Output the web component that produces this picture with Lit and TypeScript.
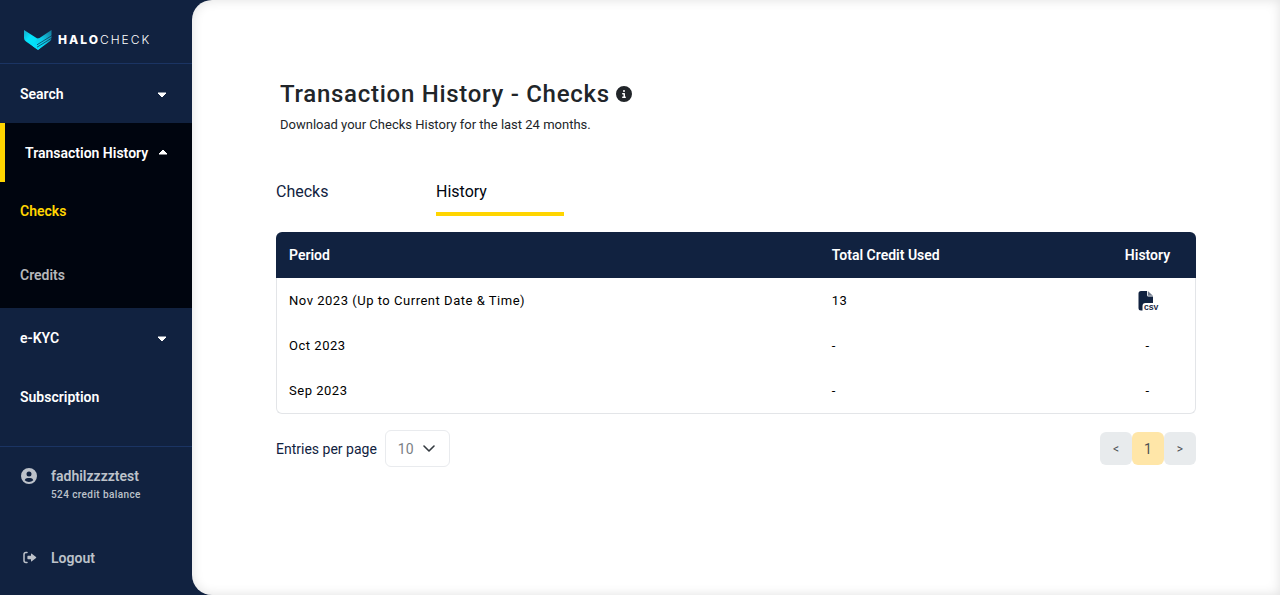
import { LitElement, html, css, svg } from "lit";
import { customElement, state } from "lit/decorators.js";

interface HistoryRow {
  period: string;
  credit: string;
  file: boolean;
}

const rows: HistoryRow[] = [
  { period: "Nov 2023 (Up to Current Date & Time)", credit: "13", file: true },
  { period: "Oct 2023", credit: "-", file: false },
  { period: "Sep 2023", credit: "-", file: false },
];

const caretDown = svg`<path d="M1 3h8L5 7z" fill="currentColor" stroke="currentColor" stroke-linejoin="round" />`;
const caretUp = svg`<path d="M1 5h8L5 1z" fill="currentColor" stroke="currentColor" stroke-linejoin="round" />`;

@customElement("halo-sidebar")
export class HaloSidebar extends LitElement {
  static styles = css`
    :host {
      display: flex;
      flex-direction: column;
      background: #112240;
      color: #fff;
      font-size: 14px;
      line-height: 20px;
      font-weight: 600;
    }
    a, button {
      color: inherit;
      font: inherit;
      text-decoration: none;
      background: none;
      border: 0;
      text-align: left;
      cursor: pointer;
    }
    .brand {
      display: flex;
      align-items: center;
      gap: 6px;
      height: 64px;
      padding: 16px 24px 0;
      box-sizing: border-box;
      border-bottom: 1px solid #1b3463;
    }
    .brand-name {
      font-family: Inter, sans-serif;
      font-size: 12px;
      line-height: 16px;
      letter-spacing: 2px;
      font-weight: 800;
    }
    .brand-light { font-weight: 300; }
    nav { border-bottom: 1px solid #1b3463; padding-bottom: 20px; }
    ul { list-style: none; margin: 0; padding: 0; }
    .item {
      display: flex;
      align-items: center;
      justify-content: space-between;
      box-sizing: border-box;
      width: 100%;
      height: 59px;
      padding: 0 25px 0 20px;
    }
    .open { background: #00050f; }
    .open > .item { border-left: 5px solid #ffd500; padding-right: 24px; }
    .sub { display: grid; gap: 6px; padding-bottom: 4px; }
    .sub .item { height: 58px; }
    .current { color: #ffd500; }
    .muted { color: #b5b7bb; }
    .account {
      display: grid;
      grid-template-columns: 16px 1fr;
      column-gap: 14px;
      padding: 19px 21px;
      color: #bdc2ca;
    }
    .account svg { margin-top: 2px; }
    .who { display: grid; }
    .balance { font-size: 10px; line-height: 18px; font-weight: 500; letter-spacing: 0.04em; }
    .logout {
      display: grid;
      grid-template-columns: 16px 1fr;
      align-items: center;
      column-gap: 14px;
      padding: 25px 21px;
      color: #bdc2ca;
    }
  `;

  render() {
    return html`
      <div class="brand">
        <svg width="28" height="20" viewBox="0 0 28 20" aria-hidden="true">
          <defs>
            <linearGradient id="l" x1="0" x2="1" y1="0" y2="1">
              <stop offset="0" stop-color="#16a6c8" />
              <stop offset=".35" stop-color="#05e3fb" />
              <stop offset="1" stop-color="#00dcf5" />
            </linearGradient>
            <linearGradient id="r" gradientUnits="userSpaceOnUse" x1="10" x2="28" y1="17" y2="3">
              <stop offset="0" stop-color="#00e4ff" />
              <stop offset=".5" stop-color="#0cc9e6" />
              <stop offset="1" stop-color="#167f9f" />
            </linearGradient>
          </defs>
          <path d="M0 0l12.500 8q1.500 1 3 0L16 18l-1 1.300q-1 .7-2 0L2 11.500Q0 10 0 8z" fill="url(#l)" />
          <path d="M13.500 8.600q.8.200 2-.6L27.500 0v8q0 2-2 3.500L15 19.300q-1 .7-2 0L8 15.500z" fill="url(#r)" />
          <path d="M13 14.800L28 5.500M13 17.200L28 8" stroke="#112240" stroke-width=".7" />
        </svg>
        <span class="brand-name">HALO<span class="brand-light">CHECK</span></span>
      </div>
      <nav>
        <ul>
          <li><button class="item">Search<svg width="10" height="8" viewBox="0 0 10 8">${caretDown}</svg></button></li>
          <li class="open">
            <button class="item" aria-expanded="true">Transaction History<svg width="10" height="8" viewBox="0 0 10 8">${caretUp}</svg></button>
            <ul class="sub">
              <li><a class="item current" href="#checks">Checks</a></li>
              <li><a class="item muted" href="#credits">Credits</a></li>
            </ul>
          </li>
          <li><button class="item">e-KYC<svg width="10" height="8" viewBox="0 0 10 8">${caretDown}</svg></button></li>
          <li><a class="item" href="#subscription">Subscription</a></li>
        </ul>
      </nav>
      <div class="account">
        <svg width="16" height="16" viewBox="0 0 16 16" aria-hidden="true">
          <path fill="currentColor" fill-rule="evenodd" d="M8 0a8 8 0 1 1 0 16A8 8 0 0 1 8 0zM8 3.500a2.500 2.500 0 1 0 0 5 2.500 2.500 0 0 0 0-5zM3.700 12.200a6 6 0 0 0 8.600 0C11.700 10.900 10.700 10 9.200 10H6.800c-1.500 0-2.500.9-3.100 2.200z" />
        </svg>
        <span class="who"><span>fadhilzzzztest</span><span class="balance">524 credit balance</span></span>
      </div>
      <a class="logout" href="#logout">
        <svg width="16" height="14" viewBox="0 0 16 14" aria-hidden="true">
          <path d="M6 1.500H5Q3 1.500 3 3.500v6q0 2 2 2h1" fill="none" stroke="currentColor" stroke-width="1.500" stroke-linecap="round" />
          <path d="M7 4.800h3V3q0-.9.800-.3l4.200 3.300q.6.500 0 1l-4.200 3.300q-.8.600-.8-.3V8.200H7q-.6 0-.6-.6V5.400q0-.6.600-.6z" fill="currentColor" />
        </svg>
        Logout
      </a>
    `;
  }
}

@customElement("app-root")
export class AppRoot extends LitElement {
  @state() private tab = "History";

  static styles = css`
    :host {
      display: grid;
      grid-template-columns: 192px minmax(0, 1fr);
      min-height: 100vh;
      background: #112240;
      font-family: Roboto, sans-serif;
      color: #212529;
    }
    main {
      box-sizing: border-box;
      padding: 78px 84px 40px;
      background: #fff;
      border-radius: 20px 0 0 20px;
      box-shadow: inset 0 0 12px rgba(0, 0, 0, 0.12);
    }
    header { padding-left: 4px; }
    h1 {
      display: flex;
      align-items: center;
      gap: 6px;
      margin: 0;
      font-size: 24px;
      line-height: 32px;
      font-weight: 500;
      letter-spacing: 0.03em;
    }
    p { margin: 5px 0 0; font-size: 13px; line-height: 20px; }
    .tabs { display: flex; gap: 32px; margin-top: 39px; }
    .tab {
      width: 128px;
      height: 42px;
      padding: 0 0 2px;
      border: 0;
      border-bottom: 4px solid transparent;
      background: none;
      font: inherit;
      font-size: 16px;
      line-height: 24px;
      text-align: left;
      color: #112240;
      cursor: pointer;
    }
    .selected { border-color: #ffd500; color: #00050f; }
    table {
      width: 100%;
      margin-top: 16px;
      border-collapse: separate;
      border-spacing: 0;
      table-layout: fixed;
      text-align: left;
    }
    th, td { box-sizing: border-box; padding: 0 13px; }
    th { height: 46px; background: #112240; color: #fff; font-size: 14px; font-weight: 600; }
    td { height: 45px; font-size: 13px; letter-spacing: 0.04em; color: #000; }
    th:first-child { border-top-left-radius: 6px; }
    th:last-child { border-top-right-radius: 6px; }
    td:first-child { border-left: 1px solid #e3e5e8; padding-left: 12px; }
    td:last-child { border-right: 1px solid #e3e5e8; padding-right: 12px; }
    tr:last-child td { height: 46px; border-bottom: 1px solid #e3e5e8; }
    tr:last-child td:first-child { border-bottom-left-radius: 6px; }
    tr:last-child td:last-child { border-bottom-right-radius: 6px; }
    .period { width: 59%; }
    .action { width: 97px; text-align: center; }
    .download { display: inline-grid; vertical-align: middle; color: #112240; }
    .csv { font-family: "Liberation Mono", monospace; font-weight: 700; font-size: 8px; letter-spacing: 0; }
    .footer { display: flex; align-items: center; justify-content: space-between; margin-top: 16px; }
    .entries { display: flex; align-items: center; gap: 8px; font-size: 14px; color: #112240; }
    .picker { display: grid; align-items: center; }
    .picker > * { grid-area: 1 / 1; }
    .picker svg { justify-self: end; margin-right: 15px; pointer-events: none; }
    select {
      appearance: none;
      width: 65px;
      height: 37px;
      padding: 0 12px;
      border: 1px solid #e9ebee;
      border-radius: 6px;
      background: #fff;
      color: #7b7f85;
      font: inherit;
    }
    .pages { display: flex; }
    .page {
      width: 32px;
      height: 33px;
      padding: 0;
      border: 0;
      border-radius: 6px;
      background: #e8ebed;
      color: #4d5154;
      font: inherit;
      font-size: 12px;
    }
    .active { background: #ffe6a8; font-size: 14px; }
  `;

  private renderTab(name: string) {
    const on = this.tab === name;
    return html`<button class="tab ${on ? "selected" : ""}" role="tab" aria-selected=${on} @click=${() => (this.tab = name)}>${name}</button>`;
  }

  private renderFile() {
    return html`<a class="download" href="#csv" aria-label="Download">
      <svg width="26" height="26" viewBox="-2 -3 26 26">
        <path d="M4 0h6v4q0 1.500 1.500 1.500H16V12H8.500Q5.500 12 5.500 15v4.500H4q-2.500 0-2.500-2.500V2.500Q1.500 0 4 0z" fill="currentColor" />
        <path d="M10.800 0L16 4.800h-5.200z" fill="currentColor" opacity=".6" />
        <text class="csv" x="7" y="19" fill="currentColor">CSV</text>
      </svg>
    </a>`;
  }

  render() {
    return html`
      <halo-sidebar></halo-sidebar>
      <main>
        <header>
          <h1>
            Transaction History - Checks
            <svg width="16" height="16" viewBox="0 0 512 512" aria-hidden="true">
              <path fill="currentColor" d="M256 512A256 256 0 1 0 256 0a256 256 0 1 0 0 512zM216 336h24V272H216c-13.300 0-24-10.700-24-24s10.700-24 24-24h48c13.300 0 24 10.700 24 24v88h8c13.300 0 24 10.700 24 24s-10.700 24-24 24H216c-13.300 0-24-10.700-24-24s10.700-24 24-24zm40-208a32 32 0 1 1 0 64 32 32 0 1 1 0-64z" />
            </svg>
          </h1>
          <p>Download your Checks History for the last 24 months.</p>
        </header>
        <div class="tabs" role="tablist">${this.renderTab("Checks")}${this.renderTab("History")}</div>
        <table>
          <thead>
            <tr><th class="period">Period</th><th>Total Credit Used</th><th class="action">History</th></tr>
          </thead>
          <tbody>
            ${rows.map((r) => html`<tr>
              <td>${r.period}</td>
              <td>${r.credit}</td>
              <td class="action">${r.file ? this.renderFile() : "-"}</td>
            </tr>`)}
          </tbody>
        </table>
        <div class="footer">
          <div class="entries">
            <label for="size">Entries per page</label>
            <div class="picker">
              <select id="size"><option>10</option><option>25</option><option>50</option></select>
              <svg width="12" height="8" viewBox="0 0 12 8"><path d="M1 1l5 5 5-5" fill="none" stroke="#343a40" stroke-width="1.600" stroke-linecap="round" stroke-linejoin="round" /></svg>
            </div>
          </div>
          <div class="pages">
            <button class="page" aria-label="Previous">&lt;</button>
            <button class="page active" aria-current="page">1</button>
            <button class="page" aria-label="Next">&gt;</button>
          </div>
        </div>
      </main>
    `;
  }
}
